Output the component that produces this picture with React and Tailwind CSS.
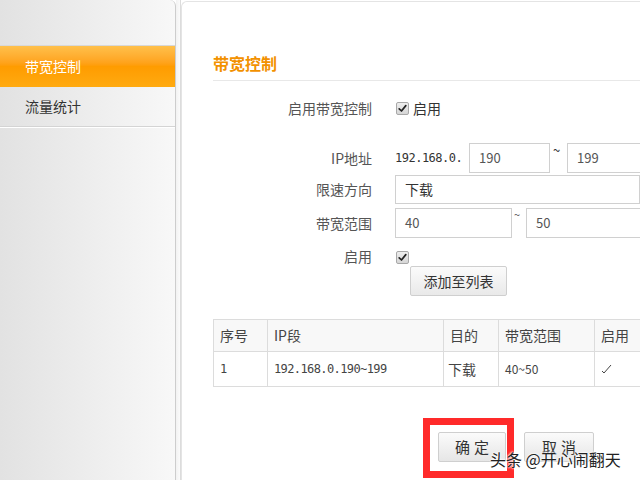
import React from "react";

const font = { fontFamily: '"Noto Sans CJK SC", "Noto Sans", sans-serif' };

function Check({ className = "" }) {
  return (
    <div className={"w-[13px] h-[13px] rounded-[2px] border border-[#a8a8a8] bg-gradient-to-b from-[#eeeeee] to-[#d6d6d6] flex items-center justify-center " + className}>
      <svg width="9" height="9" viewBox="0 0 9 9">
        <path d="M1.2 4.8 L3.5 7 L7.8 1.6" stroke="#222" strokeWidth="1.7" fill="none" strokeLinecap="round" strokeLinejoin="round" />
      </svg>
    </div>
  );
}

function Label({ children }) {
  return <div className="w-[159px] shrink-0 text-right text-[14px] text-[#555]">{children}</div>;
}

export default function App() {
  return (
    <div className="w-[640px] h-[480px] overflow-hidden bg-white flex relative" style={font}>
      {/* Sidebar */}
      <div className="w-[176px] shrink-0 h-full bg-gradient-to-r from-[#e2e2e2] to-[#f8f8f8] border-r border-[#cdcdcd] rounded-tr-[6px] pt-[45px]">
        <div className="border-t border-[#d8d8d8]" />
        <div className="h-[41px] bg-gradient-to-b from-[#ffc04a] via-[#ff9c00] to-[#ffaa10] flex items-center pl-[25px] text-[14px] text-white">
          带宽控制
        </div>
        <div className="h-[40px] flex items-center pl-[25px] text-[14px] text-[#333] border-b border-[#d4d4d4]">
          流量统计
        </div>
        <div className="border-t border-white" />
      </div>
      <div className="w-[5px] shrink-0 bg-gradient-to-r from-[#f2f2f2] to-[#fbfbfb] border-r border-[#dcdcdc]" />
      {/* Main */}
      <div className="flex-1 min-w-0 mt-[1px] border-t border-l border-[#e4e4e4] rounded-tl-[6px] pl-[31px] pt-[51px]">
        <div className="text-[16px] font-bold text-[#f29100] leading-[20px] pb-[7px] border-b border-[#e8e8e8] w-[460px]">
          带宽控制
        </div>

        <div className="mt-[15px] h-[24px] flex items-center">
          <Label>启用带宽控制</Label>
          <div className="ml-[24px] flex items-center">
            <Check />
            <span className="ml-[4px] text-[14px] text-[#333]">启用</span>
          </div>
        </div>

        <div className="mt-[23px] h-[30px] flex items-center">
          <Label>IP地址</Label>
          <div className="ml-[23px] flex items-center">
            <span className="text-[12px] text-[#333] w-[74px]" style={{ fontFamily: '"DejaVu Sans Mono", monospace', letterSpacing: "-0.5px" }}>192.168.0.</span>
            <div className="w-[81px] h-[30px] border border-[#d0d0d0] flex items-center pl-[9px] text-[13px] text-[#555]">190</div>
            <span className="w-[17px] text-[13px] text-[#333] self-start leading-[14px] pl-[3px]">~</span>
            <div className="w-[120px] h-[30px] border border-[#d0d0d0] flex items-center pl-[9px] text-[13px] text-[#555]">199</div>
          </div>
        </div>

        <div className="mt-[2px] h-[29px] flex items-center">
          <Label>限速方向</Label>
          <div className="ml-[23px] w-[260px] h-[29px] border border-[#d0d0d0] flex items-center pl-[9px] text-[14px] text-[#333]">下载</div>
        </div>

        <div className="mt-[4px] h-[30px] flex items-center">
          <Label>带宽范围</Label>
          <div className="ml-[23px] flex items-center">
            <div className="w-[117px] h-[30px] border border-[#d0d0d0] flex items-center pl-[9px] text-[13px] text-[#555]">40</div>
            <span className="w-[14px] text-[11px] text-[#555] self-start leading-[12px] pl-[2px]">~</span>
            <div className="w-[120px] h-[30px] border border-[#d0d0d0] flex items-center pl-[9px] text-[13px] text-[#555]">50</div>
          </div>
        </div>

        <div className="mt-[8px] h-[20px] flex items-start">
          <Label>启用</Label>
          <div className="ml-[24px] mt-[5px]">
            <Check />
          </div>
        </div>

        <div className="h-[30px] flex">
          <div className="ml-[197px] w-[97px] h-[30px] border border-[#cfcfcf] rounded-[2px] bg-gradient-to-b from-[#fbfbfb] to-[#e9e9e9] flex items-center justify-center text-[14px] text-[#333]">
            添加至列表
          </div>
        </div>

        <table className="mt-[23px] w-[480px] border-collapse text-[13px] text-[#444]">
          <thead>
            <tr className="h-[32px] bg-[#f8f8f8]">
              <th className="w-[54px] border border-[#dcdcdc] text-left font-normal pl-[6px] text-[14px]">序号</th>
              <th className="w-[176px] border border-[#dcdcdc] text-left font-normal pl-[6px] text-[14px]">IP段</th>
              <th className="w-[55px] border border-[#dcdcdc] text-left font-normal pl-[6px] text-[14px]">目的</th>
              <th className="w-[96px] border border-[#dcdcdc] text-left font-normal pl-[6px] text-[14px]">带宽范围</th>
              <th className="border border-[#dcdcdc] text-left font-normal pl-[6px] text-[14px]">启用</th>
            </tr>
          </thead>
          <tbody>
            <tr className="h-[35px]">
              <td className="border border-[#dcdcdc] pl-[6px] text-[12px]" style={{ fontFamily: '"DejaVu Sans Mono", monospace' }}>1</td>
              <td className="border border-[#dcdcdc] pl-[6px] text-[12px]" style={{ fontFamily: '"DejaVu Sans Mono", monospace', letterSpacing: "-0.6px" }}>192.168.0.190~199</td>
              <td className="border border-[#dcdcdc] pl-[4px] text-[14px]">下载</td>
              <td className="border border-[#dcdcdc] pl-[6px] text-[12px]">40~50</td>
              <td className="border border-[#dcdcdc] pl-[6px] text-[12px]">
                <svg width="12" height="12" viewBox="0 0 12 12">
                  <path d="M1 8 L3 10 L10 2" stroke="#444" strokeWidth="1" fill="none" />
                </svg>
              </td>
            </tr>
          </tbody>
        </table>

        <div className="mt-[31px] flex items-start">
          <div className="ml-[210px] border-[7px] border-[#ff2a2a] pl-[8px] pr-[1px] pt-[7px] pb-[9px]">
            <div className="w-[68px] h-[30px] border border-[#cfcfcf] rounded-[2px] bg-gradient-to-b from-[#fbfbfb] to-[#e6e6e6] flex items-center justify-center text-[15px] text-[#333] tracking-[4px] pl-[4px]">
              确定
            </div>
          </div>
          <div className="ml-[10px] mt-[14px] w-[70px] h-[30px] border border-[#cfcfcf] rounded-[2px] bg-gradient-to-b from-[#fbfbfb] to-[#e6e6e6] flex items-center justify-center text-[15px] text-[#333] tracking-[4px] pl-[4px]">
            取消
          </div>
        </div>
      </div>

      <div
        className="absolute left-[490px] top-[448px] text-[16px] text-[#222] leading-[22px]"
        style={{ textShadow: "0 0 2px #fff, 0 0 2px #fff, 0 0 3px #fff" }}
      >
        头条 @开心闹翻天
      </div>
    </div>
  );
}
